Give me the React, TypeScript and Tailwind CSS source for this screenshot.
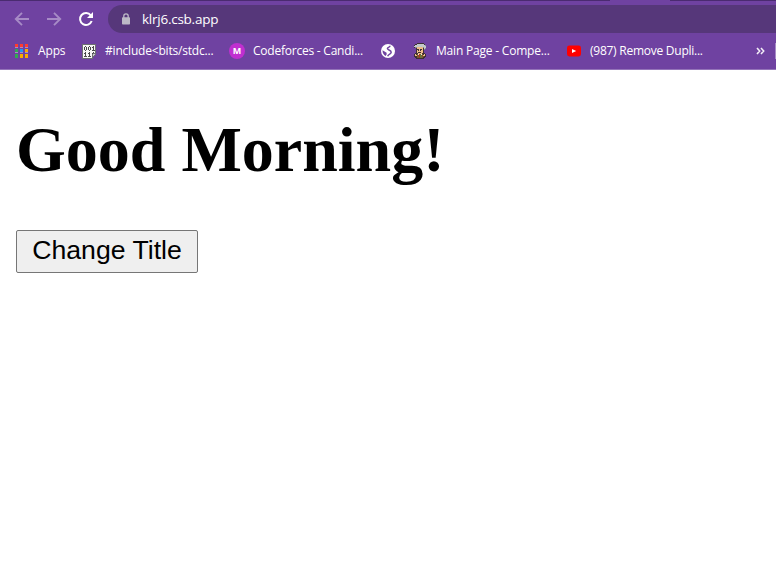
import React from 'react';

function AppsIcon() {
  const colors = ['#ff3b30', '#ff3b30', '#ff3b30', '#34a853', '#2196f3', '#f9ab00', '#34a853', '#f9ab00', '#f9ab00'];
  return (
    <svg width="14" height="14" viewBox="0 0 14 14" shapeRendering="crispEdges" className="ml-[15px] shrink-0">
      {colors.map((c, i) => (
        <g key={i}>
          <rect x={(i % 3) * 5} y={Math.floor(i / 3) * 5} width="3" height={i > 5 ? 4 : 3} fill={c} />
          {i < 6 && <rect x={(i % 3) * 5} y={Math.floor(i / 3) * 5 + 3} width="3" height="1" fill="#a98bc6" />}
        </g>
      ))}
    </svg>
  );
}

function PixelArt({ rows, palette, className }: { rows: string[]; palette: Record<string, string>; className: string }) {
  return (
    <svg width={rows[0].length} height={rows.length} shapeRendering="crispEdges" className={className}>
      {rows.flatMap((row, y) =>
        row.split('').map((c, x) => (palette[c] ? <rect key={`${x}-${y}`} x={x} y={y} width="1" height="1" fill={palette[c]} /> : null)),
      )}
    </svg>
  );
}

const binaryPage = [
  'gggggggggggggg',
  'gwwwwwwwwwwwwg',
  'gwwkwwwkwwwkwg',
  'gwkwkwkwkwkkwg',
  'gwkwkwkwkwwkwg',
  'gwkwkwkwkwwkwg',
  'gwwkwwwkwwkkkg',
  'gwwwwwwwwwwwwg',
  'gwwkwwwkwwwkwg',
  'gwkkwwkkwwkggg',
  'gwwkwwwkwwgssg',
  'gwwkwwwkwwgsg.',
  'gwkkkwkkkwgg..',
  'gwwwwwwwwwg...',
  'ggggggggggg...',
];

const portrait = [
  '....kkkkkkk...',
  '..kklllllllk..',
  '.klllllllllls.',
  '.llllllllllll.',
  '.kssffffffsll.',
  '...kffffffkls.',
  '...kkkfkkfks..',
  '...kfkfkffk...',
  '...kffffffk...',
  '...kfkkkffk...',
  '..kkkffffkkk..',
  '.kfkbwrgwbkfk.',
  '.kffbbrggbffk.',
  '.kkkbbrggbbkk.',
  '..kkbbbggbkk..',
  '...kkkkkkkk...',
];

function Label({ children, className }: { children: React.ReactNode; className: string }) {
  return <span className={`shrink-0 whitespace-nowrap ${className}`}>{children}</span>;
}

export default function App() {
  return (
    <div className="h-[571px] w-[776px] overflow-hidden bg-white">
      <header className="flex h-[70px] flex-col border-b border-[#9474b9] bg-[#6f42a1] font-['Open_Sans','Noto_Sans',sans-serif] text-white">
        <div className="flex h-px shrink-0 bg-[#4a2b70]">
          <div className="ml-[610px] w-[60px] bg-[#6f42a1]" />
        </div>
        <div className="flex h-8 shrink-0 items-start pt-1">
          <svg width="108" height="28" viewBox="0 0 108 28" fill="none" className="shrink-0">
            <path d="M29 14H16M22 7.8L15.8 14L22 20.2" stroke="#a78bc6" strokeWidth="1.9" />
            <path d="M47 14H60M54 7.8L60.2 14L54 20.2" stroke="#a78bc6" strokeWidth="1.9" />
            <path d="M90.8 10.3A6 6 0 1 0 91.7 16" stroke="white" strokeWidth="2" />
            <path d="M93 7V13H87Z" fill="white" />
          </svg>
          <div className="flex h-7 flex-1 items-center rounded-l-full bg-[#56377a]">
            <svg width="8" height="12" viewBox="0 0 8 12" className="ml-[14px] shrink-0">
              <path d="M1.8 5V3a2.2 2.2 0 0 1 4.4 0V5" fill="none" stroke="#bdb9c6" strokeWidth="1.3" />
              <rect x="0" y="4.2" width="8" height="7.3" rx="0.8" fill="#bdb9c6" />
            </svg>
            <Label className="ml-3 text-[13.5px] tracking-[-0.25px]">klrj6.csb.app</Label>
          </div>
        </div>
        <nav className="flex h-9 shrink-0 items-center text-[12px]">
          <AppsIcon />
          <Label className="ml-[9px] w-[44px] tracking-[-0.15px]">Apps</Label>
          <PixelArt rows={binaryPage} palette={{ g: '#6e7072', w: '#f7f7f5', k: '#4a4a4a', s: '#c9cbc9' }} className="shrink-0" />
          <Label className="ml-[9px] w-[124px] tracking-[-0.2px]">#include&lt;bits/stdc...</Label>
          <span className="flex size-4 shrink-0 items-center justify-center rounded-full bg-[#c02fd0] text-[9px] font-bold">M</span>
          <Label className="ml-2 w-[128px] tracking-[-0.23px]">Codeforces - Candi...</Label>
          <svg width="14" height="14" viewBox="0 0 14 14" className="shrink-0">
            <circle cx="7" cy="7" r="7" fill="white" />
            <path d="M9 1.7C9 3.7 6.4 3 6.4 4.6C6.4 6.2 10.2 5.8 10.2 8.3C10.2 10.2 7.3 9.8 6.7 12.2" fill="none" stroke="#6f42a1" strokeWidth="1.5" />
            <path d="M1.5 6.3L5.6 8.8V10.4L4.6 12C2.6 11 1.5 9 1.5 6.3Z" fill="#6f42a1" />
          </svg>
          <PixelArt
            rows={portrait}
            palette={{ k: '#3d3036', l: '#c3c8ca', s: '#858d92', w: '#eeeeea', f: '#edbb87', b: '#80552c', r: '#a93426', g: '#697239' }}
            className="ml-[18px] shrink-0"
          />
          <Label className="ml-[9px] w-[131px] tracking-[-0.2px]">Main Page - Compe...</Label>
          <svg width="14" height="12" viewBox="0 0 14 12" className="shrink-0">
            <rect y="0.5" width="14" height="11" rx="2.4" fill="#ff0000" />
            <path d="M5 4L9.2 6L5 8Z" fill="white" />
          </svg>
          <Label className="ml-[9px] w-[166px] tracking-[-0.25px]">(987) Remove Dupli...</Label>
          <svg width="9" height="8" viewBox="0 0 9 8" className="shrink-0">
            <path d="M1 1L3.7 4L1 7M5 1L7.7 4L5 7" fill="none" stroke="#f2edf7" strokeWidth="1.6" />
          </svg>
          <span className="ml-auto h-4 w-px bg-[#a78bc6]" />
        </nav>
      </header>
      <main className="px-4 pt-[43px] text-black">
        <h1 className="font-['Liberation_Serif',serif] text-[64px] leading-[74px] font-bold">Good Morning!</h1>
        <button
          type="button"
          className="mt-[43px] flex h-[43px] w-[182px] items-center justify-center rounded-[2px] border border-[#767676] bg-[#efefef] pb-[3px] font-['Liberation_Sans',sans-serif] text-[26.67px] leading-[30px] whitespace-nowrap"
        >
          Change Title
        </button>
      </main>
    </div>
  );
}
